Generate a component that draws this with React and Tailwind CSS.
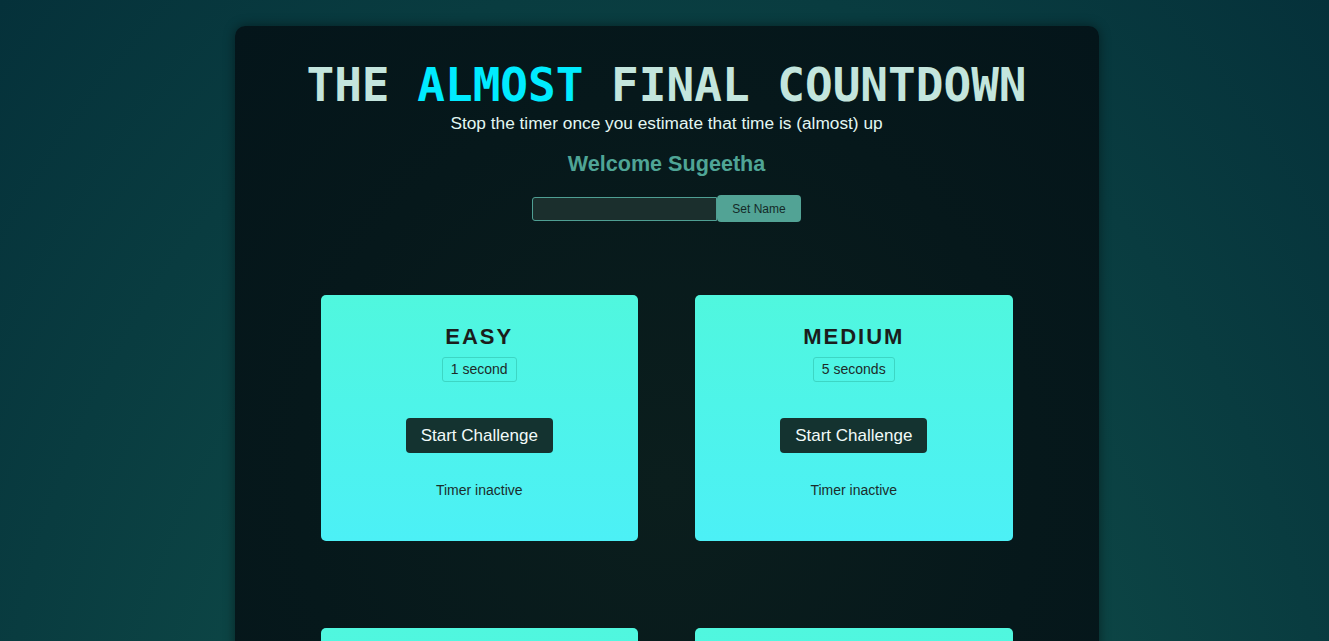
import { useState } from 'react'

const challenges = [
  { title: 'EASY', time: '1 second' },
  { title: 'MEDIUM', time: '5 seconds' },
  { title: 'HARD', time: '10 seconds' },
  { title: 'PRO', time: '15 seconds' },
]

function ChallengeCard({ title, time }) {
  return (
    <div className="flex h-[246px] flex-col items-center rounded-[5px] bg-gradient-to-b from-[#50f7de] to-[#4cf0f6] pt-[29px] font-['Liberation_Sans',Arial,sans-serif]">
      <h3 className="text-[22px] font-bold leading-[26px] tracking-[2px] text-[#1b1d1c]">{title}</h3>
      <p className="mt-[7px] rounded-[3px] border border-[#3dd6c4] px-2 py-[3px] text-sm leading-[17px] text-[#1d2b2a]">
        {time}
      </p>
      <button className="mt-[36px] rounded-[4px] bg-[#143330] px-[15px] py-[7px] text-[17px] leading-[21px] text-[#f2fbf9]">
        Start Challenge
      </button>
      <p className="mt-[27px] text-sm leading-5 text-[#1b2d2c]">Timer inactive</p>
    </div>
  )
}

export default function App() {
  const [name, setName] = useState('')

  return (
    <div className="flex min-h-screen justify-center bg-[radial-gradient(ellipse_at_bottom,#12534f_0%,#0d4746_45%,#05313a_100%)] pl-[4px] pt-[26px] font-['Liberation_Sans',Arial,sans-serif]">
      <main className="w-[864px] rounded-[10px] bg-[radial-gradient(ellipse_at_center,#0b1e1d_0%,#06181b_60%,#04151a_100%)] pb-16 pt-[32px] text-center shadow-[0_0_12px_rgba(0,0,0,0.45)]">
        <h1 className="whitespace-nowrap font-['DejaVu_Sans_Mono',monospace] text-[46px] font-bold leading-[54px] text-[#c3e5dd]">
          THE <span className="text-[#00ebff]">ALMOST</span> FINAL COUNTDOWN
        </h1>
        <p className="mt-[2px] text-[17.3px] leading-[18px] text-[#e2f7f2]">
          Stop the timer once you estimate that time is (almost) up
        </p>
        <h2 className="mt-[19px] text-[21.6px] font-bold leading-[25px] text-[#4fa596]">Welcome Sugeetha</h2>
        <div className="mt-[19px] flex items-center justify-center">
          <input
            value={name}
            onChange={(e) => setName(e.target.value)}
            className="h-[24px] w-[185px] rounded-l-[3px] border border-[#4f9f93] bg-[#1b2f2d] px-1 text-sm text-white outline-none"
          />
          <button className="h-[27px] rounded-[4px] bg-[#52a395] px-[15px] text-xs text-[#142a28]">Set Name</button>
        </div>

        <div className="mt-[73px] grid grid-cols-2 gap-x-[57px] gap-y-[87px] px-[86px]">
          {challenges.map((c) => (
            <ChallengeCard key={c.title} {...c} />
          ))}
        </div>
      </main>
    </div>
  )
}
